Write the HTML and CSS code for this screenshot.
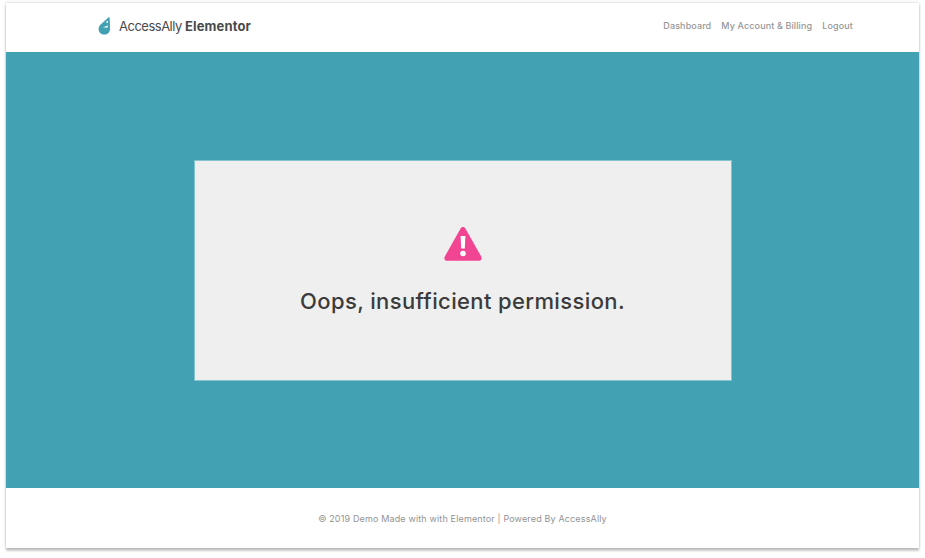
FILE: index.html
```html
<!DOCTYPE html>
<html lang="en">
<head>
    <meta charset="UTF-8">
    <title>AccessAlly Elementor</title>
    <link rel="stylesheet" href="styles.css">
</head>
<body>
    <div class="frame">
        <header>
            <div class="logo">
                <svg class="logo-icon" width="13" height="18" viewBox="0 0 13 18">
                    <path d="M10.6 0.3 C11.3 0.2 11.7 0.7 11.7 1.4 L12 12 C12 15.3 9.6 17.6 6.3 17.6 C3 17.6 0.6 15.2 0.6 12 C0.6 10.4 1.2 9 2.4 7.8 Z" fill="#42a1b3"/>
                    <path d="M7.6 5.2 L9.8 3.6 L10 6 Z M4.8 10.6 L9.8 8.6 L9.8 10.4 Z" fill="#fff"/>
                </svg>
                <span class="logo-text">AccessAlly <b>Elementor</b></span>
            </div>
            <nav>
                <a href="#dashboard">Dashboard</a>
                <a href="#account">My Account &amp; Billing</a>
                <a href="#logout">Logout</a>
            </nav>
        </header>

        <section class="main">
            <div class="card">
                <svg class="warn-icon" width="40" height="36" viewBox="0 0 40 36">
                    <path d="M20 1 C21 1 21.8 1.5 22.4 2.5 L38.2 30.5 C39.4 32.6 38.2 34.8 35.8 34.8 L4.2 34.8 C1.8 34.8 0.6 32.6 1.8 30.5 L17.6 2.5 C18.2 1.5 19 1 20 1 Z" fill="#f14594"/>
                    <path d="M17.6 10 H22.4 L21.8 22.6 H18.2 Z" fill="#fff"/>
                    <circle cx="20" cy="27.5" r="2.8" fill="#fff"/>
                </svg>
                <h1>Oops, insufficient permission.</h1>
            </div>
        </section>

        <footer>
            <p>© 2019 Demo Made with with Elementor | Powered By AccessAlly</p>
        </footer>
    </div>
</body>
</html>
```

FILE: styles.css
```css
* {
    margin: 0;
    padding: 0;
    box-sizing: border-box;
    font-family: 'Inter', 'Liberation Sans', sans-serif;
}

html, body {
    height: 558px;
    overflow: hidden;
    background-color: #fff;
}

body {
    padding: 3px 6px 10px;
}

.frame {
    height: 545px;
    display: flex;
    flex-direction: column;
    background-color: #fff;
    box-shadow: 0 3px 2px rgba(0, 0, 0, 0.2), 0 0 3px rgba(0, 0, 0, 0.22);
}

header {
    height: 49px;
    flex: none;
    display: flex;
    justify-content: space-between;
    align-items: center;
    padding: 0 66px 4px 92px;
}

.logo {
    display: flex;
    align-items: center;
    gap: 8px;
}

.logo-text {
    font-size: 13px;
    letter-spacing: -0.5px;
    color: #4a4a4a;
}

.logo-text b {
    font-weight: 700;
    letter-spacing: 0.15px;
}

nav {
    display: flex;
    gap: 10px;
}

nav a {
    font-size: 9px;
    font-weight: 500;
    letter-spacing: 0.12px;
    color: #969696;
    text-decoration: none;
}

.main {
    flex: 1;
    display: flex;
    justify-content: center;
    align-items: center;
    background-color: #42a1b3;
}

.card {
    width: 536px;
    height: 219px;
    display: flex;
    flex-direction: column;
    align-items: center;
    justify-content: center;
    gap: 26px;
    background-color: #efefef;
    box-shadow: 0 0 0 1px rgba(255, 255, 255, 0.35);
}

h1 {
    font-size: 22px;
    font-weight: 500;
    letter-spacing: 0.37px;
    color: #3b3b3b;
}

footer {
    height: 60px;
    flex: none;
    display: flex;
    align-items: center;
    justify-content: center;
}

footer p {
    font-size: 9px;
    letter-spacing: 0.15px;
    color: #939393;
}
```
